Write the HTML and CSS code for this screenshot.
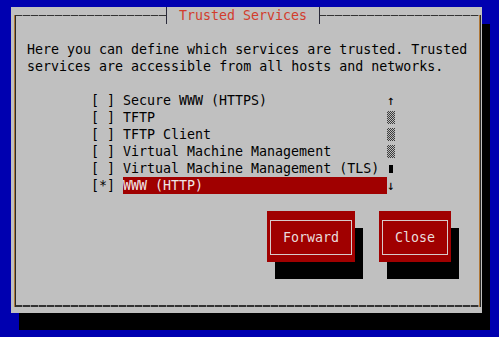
FILE: index.html
```html
<!DOCTYPE html>
<html lang="en">
<head>
    <meta charset="UTF-8">
    <title>Trusted Services</title>
    <link rel="stylesheet" href="styles.css">
</head>
<body>
    <div class="screen">
        <div class="dialog">
            <div class="frame">
                <div class="title">Trusted Services</div>

                <p class="intro">Here you can define which services are trusted. Trusted<br>services are accessible from all hosts and networks.</p>

                <div class="list">
                    <div class="row">
                        <span class="check">[ ]</span>
                        <span class="label">Secure WWW (HTTPS)</span>
                        <span class="scroll">↑</span>
                    </div>
                    <div class="row">
                        <span class="check">[ ]</span>
                        <span class="label">TFTP</span>
                        <span class="scroll"><i class="shade"></i></span>
                    </div>
                    <div class="row">
                        <span class="check">[ ]</span>
                        <span class="label">TFTP Client</span>
                        <span class="scroll"><i class="shade"></i></span>
                    </div>
                    <div class="row">
                        <span class="check">[ ]</span>
                        <span class="label">Virtual Machine Management</span>
                        <span class="scroll"><i class="shade"></i></span>
                    </div>
                    <div class="row">
                        <span class="check">[ ]</span>
                        <span class="label">Virtual Machine Management (TLS)</span>
                        <span class="scroll"><i class="thumb"></i></span>
                    </div>
                    <div class="row selected">
                        <span class="check">[*]</span>
                        <span class="label">WWW (HTTP)</span>
                        <span class="scroll">↓</span>
                    </div>
                </div>

                <div class="buttons">
                    <div class="btn forward"><span class="btn-face">Forward</span></div>
                    <div class="btn close"><span class="btn-face">Close</span></div>
                </div>
            </div>
        </div>
    </div>
</body>
</html>
```

FILE: styles.css
```css
body {
    margin: 0;
    background: #0000b0;
    font-family: "DejaVu Sans Mono", "Liberation Mono", monospace;
    font-size: 13.3px;
    line-height: 17px;
    color: #000;
    height: 337px;
    overflow: hidden;
}

.screen {
    padding: 7px 0 0 11px;
}

.dialog {
    box-sizing: border-box;
    width: 471px;
    height: 306px;
    padding: 8px 1px 6px 3px;
    background: #c0c0c0;
    box-shadow: 8px 17px 0 #000;
}

.frame {
    position: relative;
    box-sizing: border-box;
    height: 100%;
    display: flex;
    flex-direction: column;
    padding: 26px 0 0 12px;
    border-left: 1px solid #b07838;
    border-right: 1px solid #2a2a2a;
    box-shadow: inset 1px 0 0 #2a2a2a, inset -1px 0 0 #b07838;
    background:
        repeating-linear-gradient(90deg, #333 0 7px, #8a8a8a 7px 8px) left top / 100% 1px no-repeat,
        repeating-linear-gradient(90deg, #333 0 7px, #8a8a8a 7px 8px) left bottom / 100% 2px no-repeat;
}

.title {
    position: absolute;
    top: -8px;
    left: 151px;
    height: 17px;
    padding: 0 12px;
    background: #c0c0c0;
    color: #d23c2c;
    border-left: 1px solid #2a2a3a;
    border-right: 1px solid #2a2a3a;
}

.intro {
    margin: 0;
    white-space: pre;
}

.list {
    margin: 17px 0 0 64px;
    display: flex;
    flex-direction: column;
}

.row {
    display: flex;
    height: 17px;
    white-space: pre;
}

.check {
    width: 32px;
}

.label {
    width: 264px;
}

.selected .label {
    background: #a00000;
    color: #f0e6e6;
}

.scroll {
    width: 8px;
    display: flex;
    align-items: center;
    justify-content: center;
}

.shade {
    display: block;
    width: 8px;
    height: 13px;
    background: repeating-conic-gradient(#3a3a3a 0 25%, #c0c0c0 0 50%) 0 0 / 2px 2px;
}

.thumb {
    display: block;
    width: 4px;
    height: 8px;
    background: #000;
}

.buttons {
    margin-top: 17px;
    display: flex;
    justify-content: flex-end;
    gap: 24px;
    padding-right: 29px;
}

.btn {
    box-sizing: border-box;
    height: 51px;
    padding: 9px 3px 7px;
    background: #a00000;
    box-shadow: 8px 17px 0 #000;
}

.btn.forward {
    width: 88px;
}

.btn.close {
    width: 72px;
}

.btn-face {
    box-sizing: border-box;
    height: 100%;
    display: flex;
    align-items: center;
    justify-content: center;
    border: 1px solid #d8caca;
    color: #eadcdc;
}
```
